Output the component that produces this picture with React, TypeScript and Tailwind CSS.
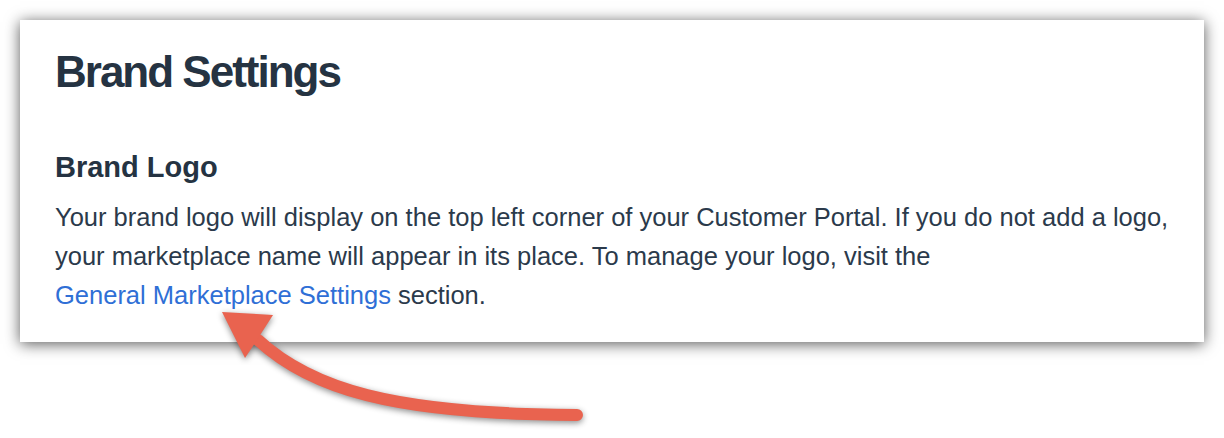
export default function App() {
  return (
    <div className="relative w-[1224px] h-[438px] bg-white overflow-hidden" style={{ fontFamily: '"Liberation Sans", Arial, sans-serif' }}>
      <div className="p-[20px]">
        <div className="w-[1184px] h-[322px] bg-white shadow-[0_2px_14px_rgba(0,0,0,0.65)] pl-[35px] pt-[30px]">
          <h1 className="text-[44px] leading-none font-bold text-[#253342] tracking-[-2px]">Brand Settings</h1>
          <h2 className="mt-[59px] text-[29px] leading-none font-bold text-[#253342]">Brand Logo</h2>
          <p className="mt-[16px] text-[25.5px] leading-[39px] text-[#2b3a4b] w-[1140px]">
            Your brand logo will display on the top left corner of your Customer Portal. If you do not add a logo,
            your marketplace name will appear in its place. To manage your logo, visit the
            <br />
            <a href="#" className="text-[#2f6fd6]">General Marketplace Settings</a> section.
          </p>
        </div>
      </div>

      {/* red annotation arrow */}
      <svg className="absolute left-0 top-0 drop-shadow-[0_2px_3px_rgba(0,0,0,0.45)]" width="1224" height="438" viewBox="0 0 1224 438">
        <path d="M258 340 C 310 388, 390 414, 577 415" fill="none" stroke="#e9634f" strokeWidth="12" strokeLinecap="round" />
        <polygon points="222,312 273,315 255,343 245,358" fill="#e9634f" />
      </svg>
    </div>
  );
}
